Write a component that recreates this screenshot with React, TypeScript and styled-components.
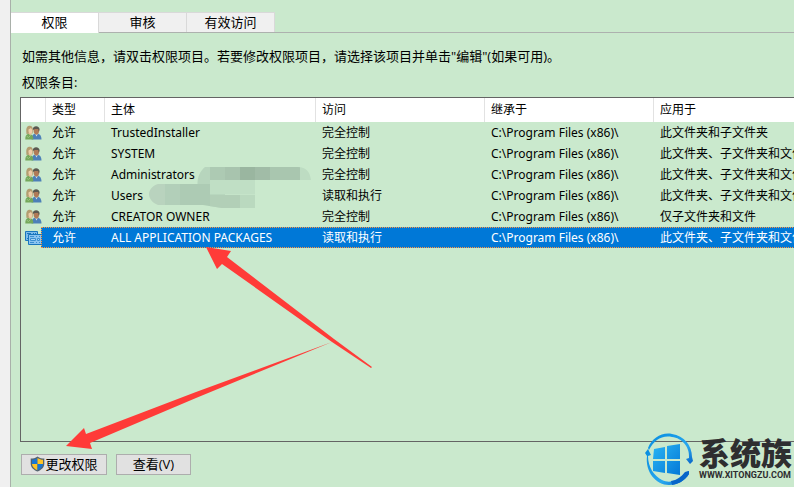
import React from "react";
import styled, { createGlobalStyle, css } from "styled-components";

const GlobalStyle = createGlobalStyle`
  *, *::before, *::after { box-sizing: border-box; }
  body {
    margin: 0;
    background: #cae9cd;
    color: #000;
    font-family: "Noto Sans", "Noto Sans CJK SC", sans-serif;
    font-size: 12px;
    overflow: hidden;
  }
`;

const Page = styled.div`
  position: relative;
  display: flex;
  height: 100vh;
  overflow: hidden;
`;

const Gutter = styled.div`
  flex: 0 0 11px;
  background: #f0f0f0;
  border-right: 1px solid #a9b0aa;
`;

const Dialog = styled.main`
  flex: 1;
  min-width: 0;
  display: flex;
  flex-direction: column;
  padding-top: 12px;
`;

const TabBar = styled.div`
  display: flex;
  height: 21px;
  border-bottom: 1px solid #adb1ae;
`;

const Tab = styled.button<{ $active?: boolean }>`
  width: 88px;
  height: 20px;
  padding: 0 0 2px;
  border: 1px solid #d9d9d9;
  border-width: 1px 1px 0 0;
  background: #f0f0f0;
  color: #000;
  font: 13px/16px "Noto Sans CJK SC", sans-serif;
  ${(p) =>
    p.$active &&
    css`
      height: 21px;
      padding-bottom: 3px;
      background: #fff;
    `}
`;

const Intro = styled.p`
  margin: 13px 0 0 11px;
  font-family: "Open Sans", "Noto Sans CJK SC", sans-serif;
  font-size: 13px;
  line-height: 20px;
  white-space: nowrap;
`;

const ListLabel = styled(Intro)`
  margin-top: 6px;
  margin-bottom: 5px;
`;

const ListBox = styled.div`
  flex: 1;
  min-height: 0;
  margin-left: 9px;
  border: 1px solid #646464;
  border-right: 0;
  overflow: hidden;
`;

const Entries = styled.table`
  width: 100%;
  table-layout: fixed;
  border-collapse: separate;
  border-spacing: 0;
  white-space: nowrap;
`;

const Column = styled.col<{ $width?: number }>`
  width: ${(p) => (p.$width ? `${p.$width}px` : "auto")};
`;

const Head = styled.th`
  height: 24px;
  padding: 0 6px;
  background: #fff;
  border-right: 1px solid #e2e2e2;
  font-weight: 400;
  line-height: 18px;
  text-align: left;

  &:last-child {
    border-right: 0;
  }
`;

const Cell = styled.td`
  height: 21px;
  padding: 0 0 0 6px;
  line-height: 18px;
  overflow: hidden;
`;

const IconCell = styled(Cell)`
  padding: 0 0 0 4px;

  svg {
    display: block;
  }
`;

const Row = styled.tr<{ $selected?: boolean }>`
  ${(p) =>
    p.$selected &&
    css`
      position: relative;
      color: #fff;

      ${Cell} {
        background: #0078d7;
      }

      ${IconCell} {
        background: linear-gradient(90deg, transparent 20px, #0078d7 20px);
      }

      ${IconCell}::after {
        content: "";
        position: absolute;
        inset: 0 -1px 0 20px;
        border: 1px dotted #ff9340;
      }
    `}
`;

const Actions = styled.div`
  display: flex;
  gap: 9px;
  padding: 12px 0 12px 10px;
`;

const ActionButton = styled.button<{ $wide?: boolean }>`
  display: flex;
  align-items: center;
  justify-content: center;
  width: ${(p) => (p.$wide ? 86 : 75)}px;
  height: 21px;
  padding: 0 0 2px;
  border: 1px solid #adadad;
  background: #e1e1e1;
  color: #000;
  font: 13px/18px "Open Sans", "Noto Sans CJK SC", sans-serif;
  white-space: nowrap;
`;

const Annotations = styled.svg`
  position: absolute;
  top: 0;
  left: 0;
  pointer-events: none;
`;

const Watermark = styled.div`
  position: absolute;
  right: 0;
  bottom: 0;
  display: flex;
  width: 150px;
  height: 56px;
  color: #2e2e30;

  > svg {
    flex: none;
  }
`;

const Brand = styled.div`
  margin-left: 3px;
  white-space: nowrap;
`;

const BrandName = styled.div`
  padding-top: 2px;
  font: 900 31px/38px "Noto Sans CJK SC", sans-serif;
`;

const BrandUrl = styled.div`
  font: 700 9px/8px Roboto, sans-serif;
`;

function UsersIcon() {
  return (
    <svg width="17" height="16" viewBox="0 0 17 16" aria-hidden="true">
      <path d="M6.500 14.500c0-4 1.500-6 4.500-6s5.500 1.500 5.500 6z" fill="#4d80b8" />
      <path d="M10 8.500l1.500 3 1.500-3z" fill="#dce8f0" />
      <path d="M8.500 4h5.700c.4 3-1 5.700-2.800 5.700S8.300 7.500 8.500 4z" fill="#b07a58" />
      <path d="M7.800 5C7 0 15.200 0 14.500 5l-.8 1.500-.5-2.500H10z" fill="#5b5850" />
      <path d="M.3 14.500c0-4 1-5.500 3.700-5.500s4.300 1.500 4.300 5.500z" fill="#75a85b" />
      <path d="M1.500 11l2 1.500 2-2" stroke="#9cc583" fill="none" />
      <path d="M1.500 9C.5 2 2.500.8 5 .8S8.500 4 7.500 8.500z" fill="#b39d70" />
      <path d="M3.500 4.500L6 3l1.300 2c.2 2.500-.8 4.500-2 4.500S3.300 7 3.500 4.500z" fill="#efcda8" />
      <path d="M3.500 8.500l1.700 2 1-2z" fill="#e2b88e" />
    </svg>
  );
}

function PackageIcon() {
  return (
    <svg width="17" height="16" viewBox="0 0 17 16" aria-hidden="true">
      <path d="M.5 1.500h12v9H.5z" fill="#7dbcec" stroke="#1976bd" />
      <path d="M2 3.500h4M8 3.500h1M10 3.500h1M2 8.500h1" stroke="#1976bd" />
      <path d="M3.500 4.500h13v10h-13z" fill="#8bc4f0" stroke="#1976bd" />
      <path d="M5 6.500h4M11 6.500h1M14 6.500h1M5 12.500h4M11 12.500h1M14 12.500h1" stroke="#3a8fd0" />
      <path d="M5.500 8.500h5v2h-5zM12.500 8.500h2v2h-2z" fill="#a9d4f5" stroke="#3a8fd0" />
    </svg>
  );
}

function ShieldIcon() {
  return (
    <svg width="15" height="16" viewBox="0 0 15 16" aria-hidden="true">
      <path d="M7.500.4C5.500 2 3 2.600.7 2.600v5c0 4 3 6.500 6.800 8 3.800-1.500 6.800-4 6.800-8v-5C12 2.600 9.500 2 7.500.4z" fill="#53626e" />
      <path d="M7.500 1.900C5.600 3.200 4 3.600 2 3.700V8h5.500z" fill="#1976d2" />
      <path d="M7.500 1.900c1.900 1.300 3.500 1.700 5.500 1.800V8H7.500z" fill="#ffc425" />
      <path d="M2 8c.2 3 2.500 5 5.500 6.300V8z" fill="#ffc425" />
      <path d="M13 8c-.2 3-2.500 5-5.500 6.300V8z" fill="#1976d2" />
    </svg>
  );
}

function BrandLogo() {
  return (
    <svg width="52" height="56" viewBox="0 0 52 56" aria-hidden="true">
      <defs>
        <linearGradient id="ring" x1="0" y1="0" x2="1" y2="1">
          <stop offset="0" stopColor="#078cdf" />
          <stop offset=".65" stopColor="#28a8ef" />
          <stop offset="1" stopColor="#0864c8" />
        </linearGradient>
        <linearGradient id="panes" x1="0" y1="0" x2="1" y2="1">
          <stop offset="0" stopColor="#2ab5f4" />
          <stop offset="1" stopColor="#0479d7" />
        </linearGradient>
      </defs>
      <path d="M4 17C8 7 18 1 28 3c12 2 20 11 20 23l1 4-3 3-4-5 3-1C46 16 38 7 28 6 18 4 10 9 5 19z" fill="url(#ring)" />
      <path d="M1 22l3-4 3 6-3 1c0 11 6 20 14 24 4 2 8 2 11 1 5-1 9-4 13-9l3-1v3c-4 7-12 11-20 11C12 54 1 41 3 25z" fill="url(#ring)" />
      <path d="M27 50c6-1 10-4 14-9l4-1v3c-4 6-10 10-17 11z" fill="#0866c9" />
      <path d="M10 18l11-2v12H9zM23 15l13-2v15H23zM9 30h12v12l-12-2zM23 30h13v14l-13-2z" fill="url(#panes)" />
    </svg>
  );
}

const path = "C:\\Program Files (x86)\\";
const entries = [
  { name: "TrustedInstaller", access: "完全控制", scope: "此文件夹和子文件夹" },
  { name: "SYSTEM", access: "完全控制", scope: "此文件夹、子文件夹和文件" },
  { name: "Administrators", access: "完全控制", scope: "此文件夹、子文件夹和文件" },
  { name: "Users", access: "读取和执行", scope: "此文件夹、子文件夹和文件" },
  { name: "CREATOR OWNER", access: "完全控制", scope: "仅子文件夹和文件" },
  { name: "ALL APPLICATION PACKAGES", access: "读取和执行", scope: "此文件夹、子文件夹和文件", selected: true },
];

const columnWidths = [25, 59, 211, 169, 169];
const headings = ["", "类型", "主体", "访问", "继承于", "应用于"];

export default function App() {
  return (
    <Page lang="zh-CN">
      <GlobalStyle />
      <Gutter />
      <Dialog>
        <TabBar role="tablist">
          <Tab role="tab" aria-selected="true" $active>权限</Tab>
          <Tab role="tab" aria-selected="false">审核</Tab>
          <Tab role="tab" aria-selected="false">有效访问</Tab>
        </TabBar>
        <Intro>如需其他信息，请双击权限项目。若要修改权限项目，请选择该项目并单击"编辑"(如果可用)。</Intro>
        <ListLabel id="entries-label">权限条目:</ListLabel>
        <ListBox>
          <Entries aria-labelledby="entries-label">
            <colgroup>
              {columnWidths.map((width, i) => <Column key={i} $width={width} />)}
              <Column />
            </colgroup>
            <thead>
              <tr>{headings.map((heading, i) => <Head key={i} scope="col">{heading}</Head>)}</tr>
            </thead>
            <tbody>
              {entries.map((entry) => (
                <Row key={entry.name} $selected={entry.selected} aria-selected={!!entry.selected}>
                  <IconCell>{entry.selected ? <PackageIcon /> : <UsersIcon />}</IconCell>
                  <Cell>允许</Cell>
                  <Cell>{entry.name}</Cell>
                  <Cell>{entry.access}</Cell>
                  <Cell>{path}</Cell>
                  <Cell>{entry.scope}</Cell>
                </Row>
              ))}
            </tbody>
          </Entries>
        </ListBox>
        <Actions>
          <ActionButton type="button" $wide><ShieldIcon />更改权限</ActionButton>
          <ActionButton type="button">查看(V)</ActionButton>
        </Actions>
      </Dialog>
      <Watermark>
        <BrandLogo />
        <Brand>
          <BrandName>系统族</BrandName>
          <BrandUrl>WWW.XITONGZU.COM</BrandUrl>
        </Brand>
      </Watermark>
      <Annotations width="400" height="460" viewBox="0 0 400 460" aria-hidden="true">
        <defs>
          <clipPath id="smudge-top"><path d="M205 167h93c8 0 12 5 13 13h-56v20h-50c-10-8-10-25 0-33z" /></clipPath>
          <clipPath id="smudge-bottom"><path d="M158 184h97v24h-33l-19-3h-45c-12-5-12-17 0-21z" /></clipPath>
        </defs>
        <g clipPath="url(#smudge-bottom)">
          <path d="M145 183h20v24h-20z" fill="#b9d3be" />
          <path d="M165 183h15v24h-15z" fill="#b2cfb9" />
          <path d="M180 183h30v25h-30z" fill="#adcbb4" />
          <path d="M210 180h15v28h-15z" fill="#b8d7be" />
          <path d="M225 180h30v15h-30z" fill="#c5e4c9" />
          <path d="M210 195h30v13h-30z" fill="#b2cfb7" />
          <path d="M240 195h15v13h-15z" fill="#bad9bf" />
        </g>
        <g clipPath="url(#smudge-top)">
          <path d="M195 167h15v17h-15z" fill="#b7d5bd" />
          <path d="M210 167h15v13h-15z" fill="#adcab3" />
          <path d="M225 167h15v13h-15z" fill="#a8c4ae" />
          <path d="M240 167h15v13h-15z" fill="#9ab6a0" />
          <path d="M255 167h15v13h-15z" fill="#a1bca7" />
          <path d="M270 167h30v13h-30z" fill="#a9c6af" />
          <path d="M300 167h12v13h-12z" fill="#bddcc2" />
          <path d="M210 180h45v14h-45z" fill="#c0dfc5" />
        </g>
        <path d="M206 247l25 4-4 6 107 82 38 28-1 1-39-26L222 264l-5 5z" fill="#ff3b38" />
        <path d="M66 446l18-18 2 6 110-42 136-50-136 56L90 443l2 6z" fill="#ff3b38" />
      </Annotations>
    </Page>
  );
}
